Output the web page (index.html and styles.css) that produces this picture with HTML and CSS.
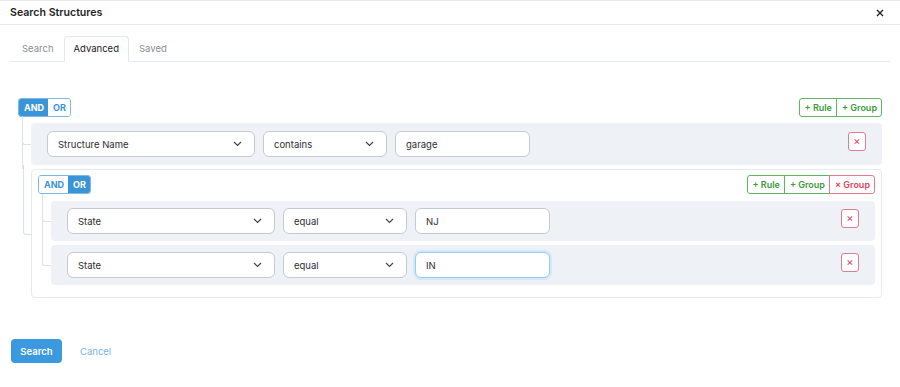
FILE: index.html
```html
<!DOCTYPE html>
<html lang="en">
  <head>
    <meta charset="utf-8">
    <title>Search Structures</title>
    <link rel="stylesheet" href="styles.css">
  </head>
  <body>
    <div class="modal">
      <div class="modal-header">
        <h2>Search Structures</h2>
        <button class="close" aria-label="Close">
          <svg width="8" height="8" viewBox="0 0 8 8"><path d="M1 1 7 7M7 1 1 7" stroke="#222" stroke-width="1.4"/></svg>
        </button>
      </div>

      <div class="modal-body">
        <ul class="tabs">
          <li>Search</li>
          <li class="active">Advanced</li>
          <li>Saved</li>
        </ul>

        <div class="qb">
          <div class="group root">
            <div class="group-header">
              <div class="toggle"><span class="on">AND</span><span>OR</span></div>
              <div class="actions">
                <button class="add">+ Rule</button><button class="add">+ Group</button>
              </div>
            </div>
            <div class="children">
              <div class="item rule">
                <div class="fields">
                  <div class="select wide">Structure Name <svg class="chev" width="9" height="6" viewBox="0 0 9 6"><path d="M1 1l3.5 3.5L8 1" fill="none" stroke="#444" stroke-width="1.2"/></svg></div>
                  <div class="select">contains <svg class="chev" width="9" height="6" viewBox="0 0 9 6"><path d="M1 1l3.5 3.5L8 1" fill="none" stroke="#444" stroke-width="1.2"/></svg></div>
                  <input class="value" type="text" value="garage">
                </div>
                <button class="remove">&times;</button>
              </div>

              <div class="item group nested">
                <div class="group-header">
                  <div class="toggle"><span>AND</span><span class="on">OR</span></div>
                  <div class="actions">
                    <button class="add">+ Rule</button><button class="add">+ Group</button><button class="del">&times; Group</button>
                  </div>
                </div>
                <div class="children">
                  <div class="item rule">
                    <div class="fields">
                      <div class="select wide">State <svg class="chev" width="9" height="6" viewBox="0 0 9 6"><path d="M1 1l3.5 3.5L8 1" fill="none" stroke="#444" stroke-width="1.2"/></svg></div>
                      <div class="select">equal <svg class="chev" width="9" height="6" viewBox="0 0 9 6"><path d="M1 1l3.5 3.5L8 1" fill="none" stroke="#444" stroke-width="1.2"/></svg></div>
                      <input class="value" type="text" value="NJ">
                    </div>
                    <button class="remove">&times;</button>
                  </div>
                  <div class="item rule">
                    <div class="fields">
                      <div class="select wide">State <svg class="chev" width="9" height="6" viewBox="0 0 9 6"><path d="M1 1l3.5 3.5L8 1" fill="none" stroke="#444" stroke-width="1.2"/></svg></div>
                      <div class="select">equal <svg class="chev" width="9" height="6" viewBox="0 0 9 6"><path d="M1 1l3.5 3.5L8 1" fill="none" stroke="#444" stroke-width="1.2"/></svg></div>
                      <input class="value focused" type="text" value="IN" autofocus>
                    </div>
                    <button class="remove">&times;</button>
                  </div>
                </div>
              </div>
            </div>
          </div>
        </div>
      </div>

      <div class="modal-footer">
        <button class="btn-primary">Search</button>
        <a class="cancel" href="#">Cancel</a>
      </div>
    </div>
  </body>
</html>
```

FILE: styles.css
```css
body {
  margin: 0;
  font-family: Inter, "Noto Sans", sans-serif;
  font-size: 9.5px;
  color: #333;
  background: #fff;
}

button,
input {
  font-family: inherit;
  font-size: inherit;
}

.modal-header {
  display: flex;
  align-items: center;
  justify-content: space-between;
  height: 25px;
  box-sizing: border-box;
  padding: 0 10px;
  border-top: 1px solid #e8e8e8;
  border-bottom: 1px solid #e8e8e8;
}

.modal-header h2 {
  margin: 0;
  font-size: 10.6px;
  font-weight: 600;
  color: #1f1f1f;
}

.close {
  border: 0;
  background: none;
  padding: 0;
  margin-right: 6px;
  display: flex;
}

.modal-body {
  padding: 0 10px;
}

/* tabs */
.tabs {
  display: flex;
  list-style: none;
  margin: 11px 0 0;
  padding: 0 0 0 2px;
  border-bottom: 1px solid #e7ecf1;
}

.tabs li {
  height: 24px;
  line-height: 24px;
  padding: 0 9px;
  margin-bottom: -1px;
  color: #8a8f96;
  border: 1px solid transparent;
  border-radius: 4px 4px 0 0;
}

.tabs li.active {
  color: #222;
  background: #fff;
  border-color: #e3e8ee #e3e8ee #fff;
}

/* query builder */
.qb {
  margin-top: 36px;
  padding: 0 8px;
}

.group-header {
  display: flex;
  justify-content: space-between;
  align-items: flex-start;
}

.toggle {
  display: flex;
  border: 1px solid #7db9e8;
  border-radius: 3px;
  overflow: hidden;
}

.toggle span {
  padding: 0 4px 0 5px;
  height: 17px;
  line-height: 17px;
  font-size: 9px;
  font-weight: 700;
  color: #3a94d8;
  background: #fff;
}

.toggle span.on {
  background: #3a94d8;
  color: #fff;
}

.actions {
  display: flex;
}

.actions button {
  height: 19px;
  padding: 0 4px 0 5px;
  background: #fff;
  font-size: 9px;
  font-weight: 600;
  border: 1px solid #5cb85c;
  color: #3b9a3b;
  margin-left: -1px;
}

.actions button:first-child {
  border-radius: 3px 0 0 3px;
}

.actions button:last-child {
  border-radius: 0 3px 3px 0;
}

.actions button.del {
  border-color: #e8788a;
  color: #e0435a;
}

.children {
  margin: 6px 0 0 13px;
  display: flex;
  flex-direction: column;
  gap: 4px;
}

.nested > .children {
  margin-top: 7px;
}

/* tree lines */
.item {
  position: relative;
}

.item::before {
  content: "";
  position: absolute;
  left: -9px;
  top: -5px;
  width: 8px;
  height: calc(50% + 5px);
  border-left: 1px solid #dae1e9;
  border-bottom: 1px solid #dae1e9;
  border-bottom-left-radius: 3px;
}

.item:first-child::before {
  top: -7px;
  height: calc(50% + 7px);
}

.item:not(:last-child)::after {
  content: "";
  position: absolute;
  left: -9px;
  top: 50%;
  bottom: -4px;
  border-left: 1px solid #dae1e9;
}

.rule {
  display: flex;
  justify-content: space-between;
  align-items: flex-start;
  padding: 8px 16px;
  background: #eef2f7;
  border-radius: 4px;
}

.nested .rule {
  padding: 7px 16px;
}

.fields {
  display: flex;
  gap: 8px;
}

.select {
  display: flex;
  align-items: center;
  justify-content: space-between;
  box-sizing: border-box;
  width: 124px;
  height: 26px;
  padding: 0 12px 0 10px;
  background: #fff;
  border: 1px solid #c3cad4;
  border-radius: 6px;
  color: #2e2e2e;
}

.select.wide {
  width: 208px;
}

.value {
  box-sizing: border-box;
  width: 135px;
  height: 26px;
  padding: 0 10px;
  border: 1px solid #c3cad4;
  border-radius: 6px;
  color: #2e2e2e;
  outline: none;
}

.value.focused {
  border-color: #9cc9ee;
  box-shadow: 0 0 0 2px #d4e8f8;
}

.remove {
  width: 18px;
  height: 19px;
  padding: 0;
  border: 1px solid #e27b8d;
  border-radius: 3px;
  background: #fff;
  color: #e0435a;
  font-size: 11px;
  line-height: 1;
  margin-top: 1px;
}

.nested {
  padding: 5px 6px 12px;
  border: 1px solid #e6ebf0;
  border-radius: 4px;
}

/* footer */
.modal-footer {
  display: flex;
  align-items: center;
  gap: 18px;
  padding: 41px 11px 0;
}

.btn-primary {
  width: 51px;
  height: 24px;
  border: 0;
  border-radius: 4px;
  background: #3b99e0;
  color: #fff;
  font-weight: 600;
  font-size: 9.5px;
}

.cancel {
  color: #76b5e6;
  text-decoration: none;
  font-size: 9.5px;
}
```
